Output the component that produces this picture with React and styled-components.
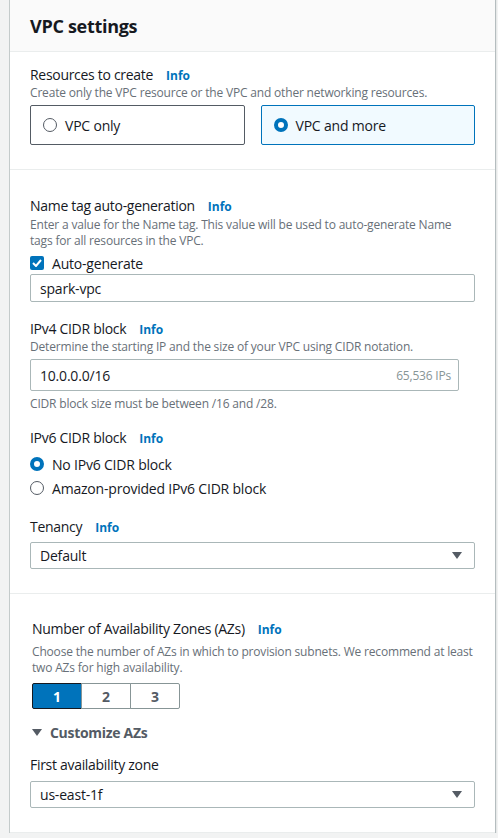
import styled, { createGlobalStyle } from "styled-components";

const GlobalStyle = createGlobalStyle`
  body {
    margin: 0;
    background: #f2f3f3;
    font-family: "Open Sans", "Noto Sans", sans-serif;
    color: #16191f;
  }
`;

const Page = styled.div`
  padding: 0 3px 0 9px;
`;

const Card = styled.div`
  background: #fff;
  border-left: 1px solid #c4cbcb;
  box-shadow: 1px 0 1px rgba(0, 28, 36, 0.25);
`;

const Header = styled.div`
  background: #fafafa;
  height: 51px;
  padding: 0 20px;
  display: flex;
  align-items: center;
  border-bottom: 1px solid #eaeded;
  h2 {
    margin: 0;
    font-size: 18px;
    font-weight: 700;
    letter-spacing: -0.3px;
  }
`;

const Section = styled.div`
  padding: ${(p) => p.$top}px 20px 24px;
  border-bottom: 1px solid #eaeded;
  display: flex;
  flex-direction: column;
`;

const Indent = styled.div`
  display: flex;
  flex-direction: column;
  margin-left: ${(p) => p.$left || 0}px;
`;

const Label = styled.div`
  font-size: 14px;
  line-height: 20px;
  height: 20px;
  letter-spacing: -0.3px;
  margin-top: ${(p) => p.$mt || 0}px;
  display: flex;
  gap: 13px;
  align-items: baseline;
`;

const Info = styled.span`
  color: #0073bb;
  font-size: 12px;
  line-height: 20px;
  font-weight: 700;
  letter-spacing: 0;
`;

const Desc = styled.div`
  font-size: 12px;
  line-height: 16px;
  letter-spacing: -0.18px;
  color: #687078;
  margin-top: ${(p) => p.$mt || 0}px;
`;

const Tiles = styled.div`
  display: grid;
  grid-template-columns: 1fr 1fr;
  gap: 16px;
  margin-top: 4px;
`;

const Tile = styled.div`
  height: 40px;
  box-sizing: border-box;
  border: 1px solid ${(p) => (p.$on ? "#0073bb" : "#545b64")};
  background: ${(p) => (p.$on ? "#f1faff" : "#fff")};
  border-radius: 2px;
  display: flex;
  align-items: center;
  gap: 8px;
  padding-left: 12px;
  font-size: 14px;
  letter-spacing: -0.2px;
`;

const Radio = styled.span`
  width: 14px;
  height: 14px;
  box-sizing: border-box;
  border-radius: 50%;
  flex: none;
  border: ${(p) => (p.$on ? "4px solid #0073bb" : "1px solid #545b64")};
  background: #fff;
`;

const Choice = styled.div`
  display: flex;
  align-items: center;
  gap: 8px;
  height: 22px;
  font-size: 14px;
  letter-spacing: -0.2px;
  margin-top: ${(p) => p.$mt || 0}px;
`;

const Check = styled.span`
  width: 14px;
  height: 14px;
  border-radius: 2px;
  background: #0073bb;
  display: flex;
  align-items: center;
  justify-content: center;
  flex: none;
`;

const Field = styled.div`
  box-sizing: border-box;
  height: ${(p) => p.$h}px;
  margin-top: ${(p) => p.$mt || 0}px;
  width: ${(p) => p.$w || "100%"};
  border: 1px solid #aab7b8;
  border-radius: 2px;
  display: flex;
  align-items: center;
  justify-content: space-between;
  padding: 0 12px 0 9px;
  font-size: 14px;
  letter-spacing: -0.2px;
`;

const Suffix = styled.span`
  font-size: 12px;
  color: #879596;
  margin-right: -5px;
`;

const Segments = styled.div`
  display: flex;
  margin-top: 7px;
`;

const Segment = styled.div`
  width: 50px;
  height: 26px;
  box-sizing: border-box;
  display: flex;
  align-items: center;
  justify-content: center;
  font-size: 14px;
  font-weight: 700;
  color: ${(p) => (p.$on ? "#fff" : "#545b64")};
  background: ${(p) => (p.$on ? "#0073bb" : "#fff")};
  border: 1px solid ${(p) => (p.$on ? "#16191f" : "#879596")};
  margin-left: -1px;
  &:first-child {
    margin-left: 0;
    border-radius: 2px 0 0 2px;
  }
  &:last-child {
    border-radius: 0 2px 2px 0;
  }
`;

const Expander = styled.div`
  display: flex;
  align-items: center;
  gap: 8px;
  margin-top: 13px;
  height: 20px;
  font-size: 14px;
  font-weight: 700;
  letter-spacing: -0.3px;
  color: #545b64;
`;

const Caret = () => (
  <svg width="10" height="7" viewBox="0 0 10 7">
    <path d="M0 0h10L5 7z" fill="#545b64" />
  </svg>
);

const Select = ({ value, mt }) => (
  <Field $h={27} $mt={mt}>
    <span>{value}</span>
    <Caret />
  </Field>
);

const App = () => (
  <Page>
    <GlobalStyle />
    <Card>
      <Header>
        <h2>VPC settings</h2>
      </Header>

      <Section $top={13}>
        <Label>
          Resources to create <Info>Info</Info>
        </Label>
        <Desc>Create only the VPC resource or the VPC and other networking resources.</Desc>
        <Tiles>
          <Tile>
            <Radio />
            VPC only
          </Tile>
          <Tile $on>
            <Radio $on />
            VPC and more
          </Tile>
        </Tiles>
      </Section>

      <Section $top={26}>
        <Label>
          Name tag auto-generation <Info>Info</Info>
        </Label>
        <Desc $mt={1}>
          Enter a value for the Name tag. This value will be used to auto-generate Name tags for
          all resources in the VPC.
        </Desc>
        <Choice $mt={3}>
          <Check>
            <svg width="10" height="8" viewBox="0 0 10 8">
              <path d="M1 4l3 3 5-6" stroke="#fff" strokeWidth="2" fill="none" />
            </svg>
          </Check>
          Auto-generate
        </Choice>
        <Field $h={28}>spark-vpc</Field>

        <Label $mt={17}>
          IPv4 CIDR block <Info>Info</Info>
        </Label>
        <Desc>Determine the starting IP and the size of your VPC using CIDR notation.</Desc>
        <Field $h={32} $mt={4} $w="429px">
          <span>10.0.0.0/16</span>
          <Suffix>65,536 IPs</Suffix>
        </Field>
        <Desc $mt={5}>CIDR block size must be between /16 and /28.</Desc>

        <Label $mt={16}>
          IPv6 CIDR block <Info>Info</Info>
        </Label>
        <Choice $mt={5}>
          <Radio $on />
          No IPv6 CIDR block
        </Choice>
        <Choice $mt={2}>
          <Radio />
          Amazon-provided IPv6 CIDR block
        </Choice>

        <Label $mt={18}>
          Tenancy <Info>Info</Info>
        </Label>
        <Select value="Default" mt={5} />
      </Section>

      <Section $top={25}>
        <Indent $left={2}>
          <Label>
            Number of Availability Zones (AZs) <Info>Info</Info>
          </Label>
          <Desc $mt={5}>
            Choose the number of AZs in which to provision subnets. We recommend at least two AZs
            for high availability.
          </Desc>
          <Segments>
            <Segment $on>1</Segment>
            <Segment>2</Segment>
            <Segment>3</Segment>
          </Segments>
          <Expander>
            <Caret />
            Customize AZs
          </Expander>
        </Indent>
        <Label $mt={13}>First availability zone</Label>
        <Select value="us-east-1f" mt={6} />
      </Section>
    </Card>
  </Page>
);

export default App;
